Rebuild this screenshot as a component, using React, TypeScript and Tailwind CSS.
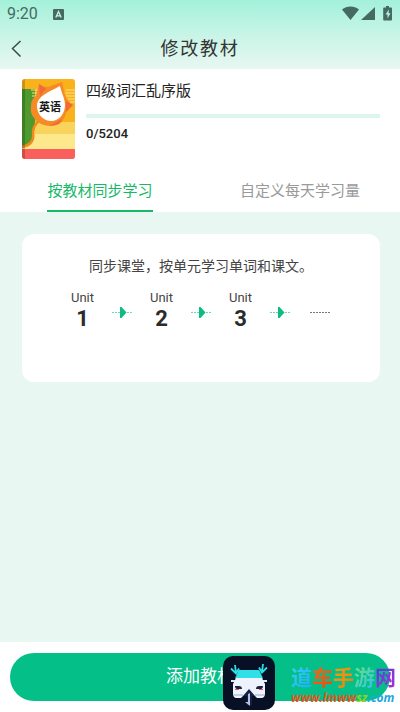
import { Fragment } from 'react'

const units = [1, 2, 3]

const watermark = [
    { char: '道', color: 'from-[#3cd0f5] to-[#1ca8fa]' },
    { char: '车', color: 'from-[#f06a1c] to-[#f0440f]' },
    { char: '手', color: 'from-[#f5a00c] to-[#f07a0c]' },
    { char: '游', color: 'from-[#74e070] to-[#2cbcf0]' },
    { char: '网', color: 'from-[#4a34e6] to-[#b028d0]' },
]

const StatusBar = () => (
    <div className="flex h-7 items-center justify-between pl-[7px] pr-2 text-[#456b60]">
        <div className="flex items-center gap-[15px]">
            <span className="text-base leading-none">9:20</span>
            <svg width="11" height="11" viewBox="0 0 11 11" aria-hidden="true">
                <rect width="11" height="11" rx="1" fill="currentColor" />
                <path d="M2.8 8.5 5.5 2.6 8.2 8.5M3.8 6.8h3.4" fill="none" stroke="#c9f5e8" strokeWidth="1.3" />
            </svg>
        </div>
        <svg width="50" height="16" viewBox="0 0 50 16" fill="currentColor" aria-hidden="true">
            <path d="M0 3.5C4.6-.5 12.4-.5 17 3.5L8.5 14z" />
            <path d="M33 1v13H19z" />
            <path d="M44 0h3v1.5h2.5c.3 0 .5.3.5.7v11.5c0 .4-.3.8-.8.8h-7.2c-.5 0-.8-.4-.8-.8V2.200c0-.4.3-.7.7-.7H44z" />
            <path d="M46.8 3.4 43.6 8.4h1.9v4l3-5.2h-1.9z" fill="#b5f3e0" />
        </svg>
    </div>
)

const BookCover = () => (
    <svg width="53" height="80" viewBox="0 0 53 80" role="img" aria-label="英语" className="shrink-0">
        <defs>
            <clipPath id="cover">
                <rect width="53" height="80" rx="3" />
            </clipPath>
        </defs>
        <g clipPath="url(#cover)">
            <rect width="53" height="80" fill="#f9b21c" />
            <path d="M0 43h53v13H0z" fill="#f8d45c" />
            <path d="M0 55h53v16H0z" fill="#fde88c" />
            <path d="M0 10h13v32c0 6-1 10-2 16-1 6-5 9-11 11z" fill="#4f9a2f" />
            <path d="M9 11h7M10 14h6M10 17h5M44 11h9M43 14h10M44 17h9M46 20h7M48 23h5" stroke="#fde28a" strokeWidth="1" />
            <path d="M0 68c10-2 12-8 11-14 0-6 2-9 6-12" fill="none" stroke="#f28a1c" strokeWidth="2.5" />
            <path d="M17 5c3 2 6 3 9 3l14-5c1 4 2 9 3 13 2 5 4 8 8 10-4 3-6 6-8 11-2 6-6 9-12 10-7 0-12-1-16-5-5-4-7-9-6-15 0-5 2-8 5-10z" fill="#f58a26" />
            <path d="M17 5c3 2 6 4 7 5-2 2-4 4-6 8zM51 26l-7 7V22zM27 47l10-2 3-5z" fill="#f06a3c" />
            <path d="M38 7c1 6 5 12 5 19 0 9-6 16-14 16S15 35 15 27C15 17 27 13 38 7z" fill="#fff" />
            <rect y="70" width="53" height="10" fill="#f9605c" />
            <path d="M0 0h3v80H0z" fill="#000" opacity=".18" />
        </g>
        <text x="28" y="32" textAnchor="middle" fill="#1a1a1a" className="text-[11px] font-bold">英语</text>
    </svg>
)

const Arrow = () => (
    <svg width="21" height="12" viewBox="0 0 21 12" className="mt-4" aria-hidden="true">
        <path d="M0 6.5h21" stroke="#6fd8b4" strokeWidth="1" strokeDasharray="2 1" />
        <path d="M8 1h1.5L14.5 6.5 9.5 12H8z" fill="#0dbd80" />
    </svg>
)

const CarLogo = () => (
    <svg width="52" height="54" viewBox="0 0 52 54" aria-hidden="true">
        <rect width="52" height="54" rx="10" fill="#071024" />
        <path d="M17 14h18c1 0 1.500.5 2 1.500l3 7H12l3-7c.5-1 1-1.500 2-1.500z" fill="#2fe0e6" />
        <path d="M12 9l1 8M8 12.5l5 5 3-5M40 8l-1 8M44 11.5l-5 5-3-5" stroke="#2ce0e6" strokeWidth="1.8" fill="none" />
        <path d="M8 24h4v2H8zM40 24h4v2h-4z" fill="#dfe6f8" />
        <path d="M13 22h26l3 6v9c0 3-1 5-4 5h-4l-2-2H20l-2 2h-4c-3 0-4-2-4-5v-9z" fill="#eef2fc" />
        <path d="M12 30h4c2 0 3 1 3 3h-5c-1 0-2-1-2-3zM40 30h-4c-2 0-3 1-3 3h5c1 0 2-1 2-3z" fill="#1b2340" />
        <path d="M12 33h4v1h-4zM36 33h4v1h-4z" fill="#d8586a" />
        <path d="M11 38h9v2h-9zM32 38h9v2h-9z" fill="#c3cde9" />
        <path d="M26 33l6 7h-3v9h-5v-9h-4z" fill="#14203f" />
        <path d="M25 38l2-1v13l-5-4h3z" fill="#b4bfe6" />
    </svg>
)

const App = () => (
    <div className="flex min-h-screen flex-col bg-[#e8f7f2] font-[Roboto,'Noto_Sans_CJK_SC',sans-serif] text-[#222]">
        <header className="bg-linear-to-b from-[#a3f1da] to-[#e8f7f2]">
            <StatusBar />
            <div className="grid h-[41px] grid-cols-[40px_1fr_40px] items-center">
                <button type="button" aria-label="返回" className="flex h-10 items-center pl-[11px]">
                    <svg width="11" height="18" viewBox="0 0 11 18" fill="none" stroke="#3d4b46" strokeWidth="1.5">
                        <path d="M9.5 1 1.5 8.5l8 8" />
                    </svg>
                </button>
                <h1 className="text-center text-lg tracking-widest text-[#333]">修改教材</h1>
            </div>
        </header>

        <section className="bg-white">
            <div className="flex gap-[11px] pl-[22px] pr-5 pt-[10px]">
                <BookCover />
                <div className="flex-1">
                    <h2 className="text-[15px] leading-6">四级词汇乱序版</h2>
                    <div role="progressbar" aria-label="学习进度" aria-valuenow={0} aria-valuemax={5204} className="mt-[11px] h-1 bg-[#dcf6ec]" />
                    <p className="mt-[6px] text-[13px] font-medium leading-5">0/5204</p>
                </div>
            </div>
            <div role="tablist" className="mt-[10px] grid grid-cols-2 text-[15px]">
                <button type="button" role="tab" aria-selected="true" className="justify-self-center border-b-2 border-[#17b868] pb-2 pt-[11px] leading-[22px] text-[#17b868]">按教材同步学习</button>
                <button type="button" role="tab" aria-selected="false" className="justify-self-center pb-[10px] pt-[11px] leading-[22px] text-[#9a9a9a]">自定义每天学习量</button>
            </div>
        </section>

        <main className="flex-1 pb-5 pl-[22px] pr-5 pt-[22px]">
            <div className="rounded-xl bg-white pb-[50px] pt-[22px]">
                <p className="text-center text-sm text-[#444]">同步课堂，按单元学习单词和课文。</p>
                <div className="mt-[14px] flex items-start justify-center gap-[17px]">
                    {units.map((unit) => (
                        <Fragment key={unit}>
                            <div className="flex w-6 flex-col items-center">
                                <span className="text-[13px] leading-4 text-[#444]">Unit</span>
                                <span className="text-[22px] font-bold leading-[26px] text-[#2b2b2b]">{unit}</span>
                            </div>
                            <Arrow />
                        </Fragment>
                    ))}
                    <svg width="24" height="12" viewBox="0 0 24 12" className="mt-4" aria-hidden="true">
                        <path d="M2 6.5h20" stroke="#777" strokeWidth="1" strokeDasharray="2 1" />
                    </svg>
                </div>
            </div>
        </main>

        <footer className="relative bg-white px-[10px] pb-[11px] pt-[11px]">
            <button type="button" className="h-12 w-full rounded-full bg-[#04c088] text-[17px] text-white">添加教材</button>
            <div className="absolute bottom-[2px] right-1 flex items-end gap-4">
                <CarLogo />
                <div className="w-[105px] pb-1">
                    <p className="flex text-[21px] font-bold leading-6">
                        {watermark.map(({ char, color }) => (
                            <span key={char} className={`bg-linear-to-br bg-clip-text text-transparent ${color}`}>{char}</span>
                        ))}
                    </p>
                    <p className="whitespace-nowrap font-[Open_Sans,sans-serif] text-xs font-bold italic">
                        <span className="text-[#e0561f]">www.lmww</span>
                        <span className="text-[#8fd41c]">sz</span>
                        <span className="text-[#1ea6e0]">.com</span>
                    </p>
                </div>
            </div>
        </footer>
    </div>
)

export default App
